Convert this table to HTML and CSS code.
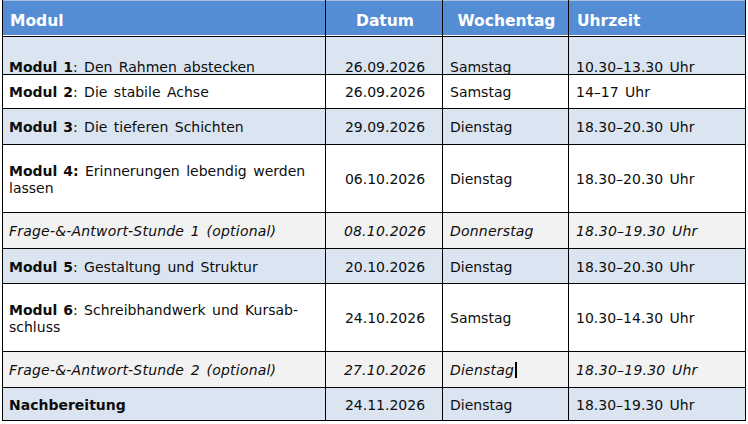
FILE: index.html
```html
<!DOCTYPE html>
<html lang="de">
<head>
<meta charset="utf-8">
<title>Kursplan</title>
<link rel="stylesheet" href="styles.css">
</head>
<body>
<table class="plan">
  <colgroup>
    <col class="c-modul">
    <col class="c-datum">
    <col class="c-tag">
    <col class="c-zeit">
  </colgroup>
  <thead>
    <tr class="head">
      <th class="left">Modul</th>
      <th class="center">Datum</th>
      <th class="center">Wochentag</th>
      <th class="left">Uhrzeit</th>
    </tr>
  </thead>
  <tbody>
    <tr class="blue first">
      <td><b>Modul 1</b>: Den Rahmen abstecken</td>
      <td class="center">26.09.2026</td>
      <td>Samstag</td>
      <td>10.30–13.30 Uhr</td>
    </tr>
    <tr class="white h34">
      <td><b>Modul 2</b>: Die stabile Achse</td>
      <td class="center">26.09.2026</td>
      <td>Samstag</td>
      <td>14–17 Uhr</td>
    </tr>
    <tr class="blue h36">
      <td><b>Modul 3</b>: Die tieferen Schichten</td>
      <td class="center">29.09.2026</td>
      <td>Dienstag</td>
      <td>18.30–20.30 Uhr</td>
    </tr>
    <tr class="white h68">
      <td class="wrap"><b>Modul 4:</b> Erinnerungen lebendig werden<br>lassen</td>
      <td class="center">06.10.2026</td>
      <td>Dienstag</td>
      <td>18.30–20.30 Uhr</td>
    </tr>
    <tr class="gray h36 ital">
      <td>Frage-&amp;-Antwort-Stunde 1 (optional)</td>
      <td class="center">08.10.2026</td>
      <td>Donnerstag</td>
      <td>18.30–19.30 Uhr</td>
    </tr>
    <tr class="blue h35">
      <td><b>Modul 5</b>: Gestaltung und Struktur</td>
      <td class="center">20.10.2026</td>
      <td>Dienstag</td>
      <td>18.30–20.30 Uhr</td>
    </tr>
    <tr class="white h68">
      <td class="wrap"><b>Modul 6</b>: Schreibhandwerk und Kursab-<br>schluss</td>
      <td class="center">24.10.2026</td>
      <td>Samstag</td>
      <td>10.30–14.30 Uhr</td>
    </tr>
    <tr class="gray h36 ital">
      <td>Frage-&amp;-Antwort-Stunde 2 (optional)</td>
      <td class="center">27.10.2026</td>
      <td>Dienstag<span class="caret"></span></td>
      <td>18.30–19.30 Uhr</td>
    </tr>
    <tr class="blue h33">
      <td><b>Nachbereitung</b></td>
      <td class="center">24.11.2026</td>
      <td>Dienstag</td>
      <td>18.30–19.30 Uhr</td>
    </tr>
  </tbody>
</table>
</body>
</html>
```

FILE: styles.css
```css
html, body {
  margin: 0;
  padding: 0;
  background: #ffffff;
}

body {
  font-family: "DejaVu Sans", Verdana, sans-serif;
  font-size: 14px;
  color: #0d0d0d;
}

.plan {
  margin-left: 2px;
  width: 744px;
  table-layout: fixed;
  border-collapse: collapse;
  border-top: 1px solid #a9bfe0;
}

.c-modul { width: 323px; }
.c-datum { width: 117px; }
.c-tag { width: 126px; }
.c-zeit { width: 177px; }

.plan th,
.plan td {
  border-left: 1px solid #000;
  border-right: 1px solid #000;
  padding: 2px 4px 0 6px;
  vertical-align: middle;
  line-height: 17px;
  white-space: nowrap;
}

.plan td {
  border-bottom: 1px solid #000;
  word-spacing: 2px;
}

.plan td:nth-child(n+3) {
  padding-left: 7px;
}

.plan th {
  background: #548dd4;
  color: #ffffff;
  font-weight: bold;
  font-size: 15.5px;
  height: 30px;
  border-bottom: 1px solid #000;
  box-shadow: inset 0 -1px 0 #ffffff;
  padding-top: 5px;
  padding-bottom: 0;
}

.plan th.left { padding-left: 7px; }
.plan th:last-child { padding-left: 8px; }

.plan .left { text-align: left; }
.plan .center { text-align: center; }

.plan td.wrap {
  text-align: justify;
  text-align-last: left;
}

.plan b { font-weight: bold; word-spacing: 1px; }

.blue td { background: #dbe5f1; }
.white td { background: #ffffff; }
.gray td { background: #f2f2f2; }
.ital td { font-style: italic; letter-spacing: 0.2px; }

.first td {
  height: 37px;
  vertical-align: bottom;
  padding-top: 0;
  padding-bottom: 0;
  line-height: 14px;
}
.h33 td { height: 30px; }
.h34 td { height: 31px; }
.h35 td { height: 32px; }
.h36 td { height: 33px; }
.h68 td { height: 65px; }

.caret {
  display: inline-block;
  width: 2px;
  height: 16px;
  background: #000;
  margin-left: 1px;
  vertical-align: -3px;
}
```
